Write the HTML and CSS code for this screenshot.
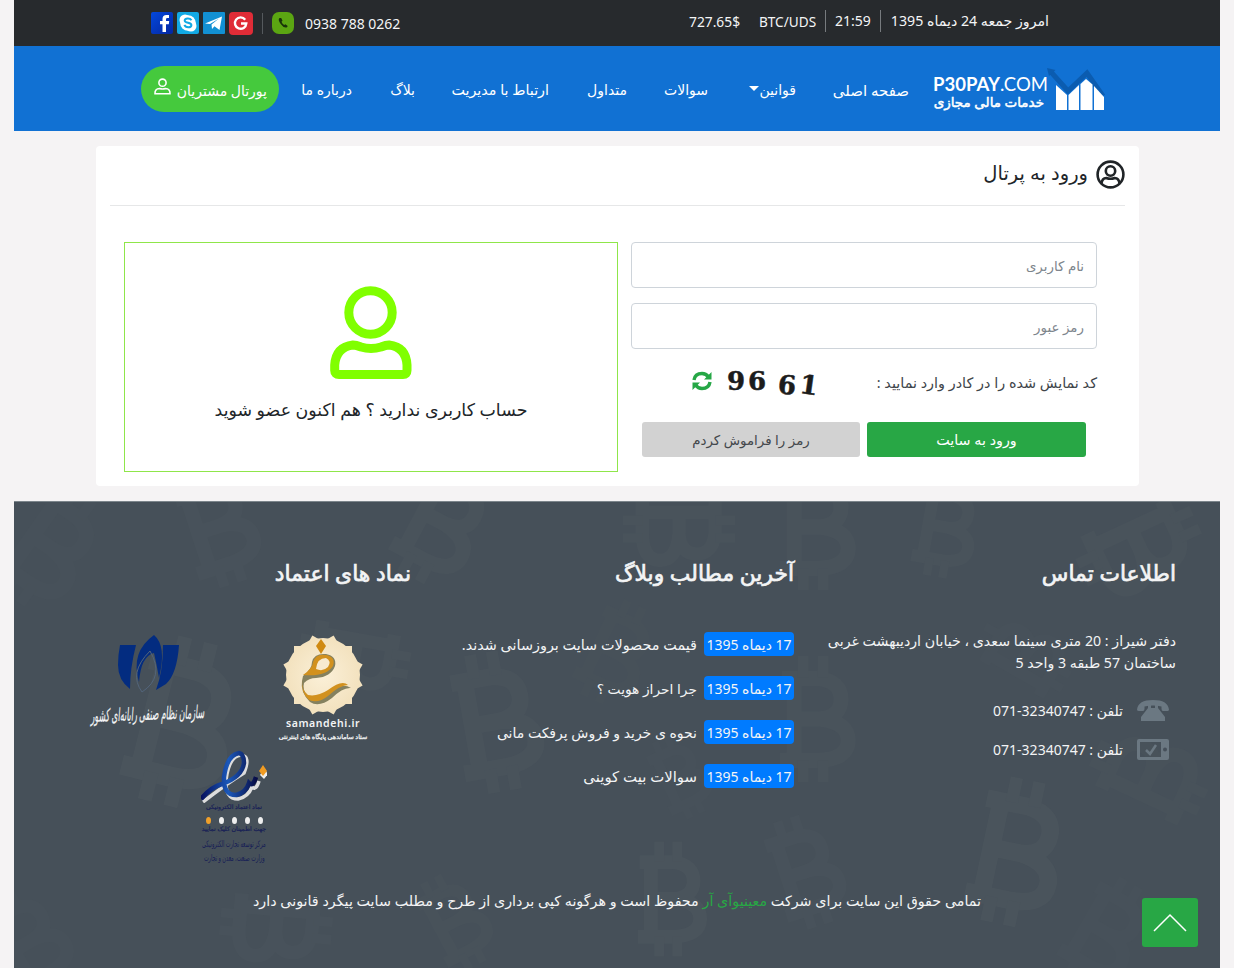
FILE: index.html
```
<!DOCTYPE html>
<html lang="fa" dir="rtl">
<head>
<meta charset="utf-8">
<title>P30PAY.COM</title>
<link rel="stylesheet" href="styles.css">
</head>
<body>
<div class="page">
  <div class="topbar">
    <div class="status">
      <span class="date">امروز جمعه 24 دیماه 1395</span>
      <span class="time">21:59</span>
      <span class="pair">BTC/UDS</span>
      <span class="rate" dir="ltr">727.65$</span>
    </div>
    <div class="social" dir="ltr">
      <svg width="22" height="22" viewBox="0 0 22 22"><defs><linearGradient id="fb" x2="1" y2="1"><stop stop-color="#0348dc"/><stop offset="1" stop-color="#0426a0"/></linearGradient></defs><rect width="22" height="22" rx="2" fill="url(#fb)"/><path d="M18 3h-2.500Q11.500 3 11.500 7v2H9v3.200h2.500V20H15v-7.800h2.800l.4-3.200H15V7.200q0-1.200 1.300-1.200H18z" fill="#fff"/></svg>
      <svg width="22" height="22" viewBox="0 0 22 22"><rect width="22" height="22" rx="2" fill="#12a9e4"/><circle cx="8" cy="8" r="5.500" fill="#fff"/><circle cx="14" cy="14" r="5.500" fill="#fff"/><circle cx="11" cy="11" r="7.800" fill="#fff"/><path d="M14.500 8.200C13 5.700 7.500 5.900 7.700 8.700c.2 2.700 6.800 1.500 6.700 4.400-.1 2.700-5.700 3.200-7-.2" fill="none" stroke="#12a9e4" stroke-width="2"/></svg>
      <svg width="22" height="22" viewBox="0 0 22 22"><rect width="22" height="22" rx="1" fill="#1290d3"/><path d="M2 11.500 19 4.500 16.500 18l-5-3.700-2.500 2.700-.5-4.500 7.500-6-9 5.500z" fill="#fff"/></svg>
      <svg width="24" height="23" viewBox="0 0 24 23"><rect width="24" height="23" rx="4" fill="#e02c37"/><path d="M16.200 7.700A5.700 5.700 0 1 0 17.300 11.500H12" fill="none" stroke="#fff" stroke-width="2.400"/></svg>
      <i class="divider"></i>
      <svg class="phone" width="22" height="22" viewBox="0 0 22 22"><rect width="22" height="22" rx="7" fill="#5ba512"/><path d="M7.500 6q-2 1.500 1.200 6t6.300 3.300l.7-1.300-2.300-1.700-1.200.8q-1.800-1-2.700-3.300l1-1L9.200 6z" fill="#18320a"/></svg>
      <span class="mobile">0938 788 0262</span>
    </div>
  </div>

  <nav class="navbar">
    <a class="brand">
      <svg class="brand-mark" width="60" height="44" viewBox="0 0 60 44"><path d="M5 5 22 24 41 6 57 29" fill="none" stroke="#0b5cb0" stroke-width="5"/><path d="M1 1 9.500 3 3 9z" fill="#0b5cb0"/><g fill="#fff"><path d="M10 18l11 10v15H10z"/><path d="M22.500 28l10.500-10v25H22.500z"/><path d="M34.500 17l5.500-5 6.500 5.500V43h-12z"/><path d="M48 19l10 11v13H48z"/></g></svg>
      <span class="brand-text"><b dir="ltr">P30PAY<em>.COM</em></b><small>خدمات مالی مجازی</small></span>
    </a>
    <a class="item w-home">صفحه اصلی</a>
    <a class="item w-rules">قوانین<i class="caret"></i></a>
    <a class="item w-faq">سوالات</a>
    <a class="item w-common">متداول</a>
    <a class="item w-contact">ارتباط با مدیریت</a>
    <a class="item w-blog">بلاگ</a>
    <a class="item w-about">درباره ما</a>
    <a class="portal"><span>پورتال مشتریان</span><svg width="17" height="17" viewBox="0 0 17 17" fill="none" stroke="#fff" stroke-width="1.600"><circle cx="8.500" cy="4.700" r="3.600"/><path d="M1 15.700q-.3-5 4.500-5.200 3 1 6 0 4.800.2 4.500 5.200z"/></svg></a>
  </nav>

  <main class="card">
    <header class="card-head">
      <svg width="29" height="29" viewBox="0 0 29 29" fill="none" stroke="#202427" stroke-width="2.600"><circle cx="14.500" cy="14.500" r="12.900"/><circle cx="14.500" cy="11" r="4.700"/><path d="M5.500 23.500q.5-5.300 4.800-5.500 4.200 1.600 8.400 0 4.300.2 4.800 5.500"/></svg>
      <h1>ورود به پرتال</h1>
    </header>
    <div class="card-body">
      <form class="login">
        <div class="field"><span class="ph-user">نام کاربری</span></div>
        <div class="field"><span class="ph-pass">رمز عبور</span></div>
        <div class="captcha-row">
          <label>کد نمایش شده را در کادر وارد نمایید :</label>
          <div class="captcha" dir="ltr">
            <svg class="refresh" width="20" height="20" viewBox="0 0 20 20"><g fill="none" stroke="#26a746" stroke-width="3.400"><path d="M2 9Q3 2.500 10 2.500q4 0 6.500 3.500"/><path d="M18 11q-1 6.500-8 6.500-4 0-6.500-3.500"/></g><path d="M19.500 1v7.500H12zM.5 19v-7.500H8z" fill="#26a746"/></svg>
            <b class="d1">9</b><b class="d2">6</b><b class="d3">6</b><b class="d4">1</b>
          </div>
        </div>
        <div class="buttons"><a class="btn go">ورود به سایت</a><a class="btn forgot">رمز را فراموش کردم</a></div>
      </form>
      <a class="signup">
        <svg width="82" height="93" viewBox="0 0 82 93" fill="none" stroke="#80ff00" stroke-width="9"><circle cx="40.500" cy="26.500" r="21.700"/><path d="M9 88.500H73q4 0 4-4V79Q76 61 59 59q-3 0-8 2-10 3-20 0-5-2-8-2Q6 61 4.700 79v5.500q0 4 4.300 4z"/></svg>
        <span>حساب کاربری ندارید ؟ هم اکنون عضو شوید</span>
      </a>
    </div>
  </main>

  <footer class="footer">
    <svg class="coins" width="1206" height="467" viewBox="0 0 1206 467" fill="none" stroke="#4b555d" stroke-width="17">
      <defs><g id="coin"><path d="M-36-45H5Q30-42 30-22T5 0H-22M5 0Q38 3 38 24T5 46H-38M-22-45V46"/><path d="M-12-70V-46M10-70V-46M-12 46V70M10 46V70" stroke-width="12"/></g></defs>
      <use href="#coin" transform="translate(35 45) rotate(35) scale(.9)" opacity=".25"/>
      <use href="#coin" transform="translate(202 25) rotate(-18) scale(.85)" opacity=".5"/>
      <use href="#coin" transform="translate(427 20) rotate(28) scale(.9)" opacity=".6"/>
      <use href="#coin" transform="translate(665 28) rotate(90) scale(.8)" opacity=".6"/>
      <use href="#coin" transform="translate(800 25) scale(.9)" opacity=".7"/>
      <use href="#coin" transform="translate(930 25) rotate(10) scale(.72)" opacity=".6"/>
      <use href="#coin" transform="translate(1125 45) rotate(65) scale(.9)" opacity=".6"/>
      <use href="#coin" transform="translate(340 155) rotate(100) scale(.8)" opacity=".6"/>
      <use href="#coin" transform="translate(165 220) rotate(14) scale(1.200)" opacity=".8"/>
      <use href="#coin" transform="translate(480 220) rotate(-10)" opacity=".7"/>
      <use href="#coin" transform="translate(800 217) scale(.9)" opacity=".6"/>
      <use href="#coin" transform="translate(600 150) rotate(25) scale(.75)" opacity=".2"/>
      <use href="#coin" transform="translate(1010 155) rotate(-60) scale(.7)" opacity=".3"/>
      <use href="#coin" transform="translate(1135 275) rotate(-65) scale(.85)" opacity=".4"/>
      <use href="#coin" transform="translate(665 275) rotate(-25) scale(.6)" opacity=".3"/>
      <use href="#coin" transform="translate(1000 350) rotate(12) scale(1.050)" opacity=".9"/>
      <use href="#coin" transform="translate(790 370) rotate(-18) scale(.8)" opacity=".5"/>
      <use href="#coin" transform="translate(655 397) scale(.82)" opacity=".8"/>
      <use href="#coin" transform="translate(262 425) rotate(95) scale(.8)" opacity=".5"/>
      <use href="#coin" transform="translate(440 420) rotate(-28) scale(.7)" opacity=".4"/>
      <use href="#coin" transform="translate(1090 430) rotate(30) scale(.8)" opacity=".3"/>
      <use href="#coin" transform="translate(15 440) rotate(-30) scale(.8)" opacity=".25"/>
    </svg>
    <div class="columns">
      <section class="contact">
        <h2 class="h-contact">اطلاعات تماس</h2>
        <p class="address"><span class="a1">دفتر شیراز : 20 متری سینما سعدی ، خیابان اردیبهشت غربی</span><span class="a2">ساختمان 57 طبقه 3 واحد 5</span></p>
        <div class="tel"><svg width="32" height="21" viewBox="0 0 32 21"><path d="M0 9.500C1 3 6 0 16 0s15 3 16 9.500c0 1.500-1 1.500-2 1.500h-4q-1.500 0-1.500-2.200V6.500q-8.500-2-17 0v2.300Q7.500 11 6 11H2Q0 11 0 9.500z" fill="#6b7882"/><path d="M11 5h3v3h4V5h3v3l7 9v4H4v-4l7-9z" fill="#6b7882"/></svg><span>تلفن : 32340747-071</span></div>
        <div class="tel second"><svg width="32" height="21" viewBox="0 0 32 21"><path d="M2 0h28q2 0 2 2v17q0 2-2 2H2q-2 0-2-2V2q0-2 2-2zm1 3v15h21V3z" fill="#6b7882" fill-rule="evenodd"/><circle cx="28" cy="10.500" r="2" fill="#46505a"/><path d="M9 11l4 4 6-9" fill="none" stroke="#6b7882" stroke-width="2.500"/></svg><span>تلفن : 32340747-071</span></div>
      </section>
      <section class="posts">
        <h2 class="h-posts">آخرین مطالب وبلاگ</h2>
        <ul>
          <li><b><span>17 دیماه 1395</span></b><span class="p1">قیمت محصولات سایت بروزسانی شدند.</span></li>
          <li><b><span>17 دیماه 1395</span></b><span class="p2">جرا احراز هویت ؟</span></li>
          <li><b><span>17 دیماه 1395</span></b><span class="p3">نحوه ی خرید و فروش پرفکت مانی</span></li>
          <li><b><span>17 دیماه 1395</span></b><span class="p4">سوالات بیت کوینی</span></li>
        </ul>
      </section>
      <section class="trust">
        <h2 class="h-trust">نماد های اعتماد</h2>
        <div class="badges">
          <div class="samandehi">
            <svg width="84" height="84" viewBox="-42 -42 84 84"><defs><path id="sq" d="M-29-29H29V29H-29z"/><radialGradient id="cream"><stop stop-color="#fbf0d8"/><stop offset="1" stop-color="#f3e2bf"/></radialGradient></defs><g fill="#f3e2bf"><use href="#sq"/><use href="#sq" transform="rotate(30)"/><use href="#sq" transform="rotate(60)"/></g><circle r="37" fill="url(#cream)"/><path d="M-2-36l5 7-5 8-5-8z" fill="#d08a12"/><g fill="#85815f"><path d="M-20 1Q-11-6-11-13-9-22 3-21 14-19 12-9 8 2-7 3-14 3-19 8-21 15-15 21-7 24 5 17 19 7 28 13 20 12 9 23-4 33-13 27-23 17-21 6z"/></g><g fill="#d2911e"><path d="M-20 0Q-10-7-10-13-7-22 3-20 13-18 10-9 3 2-20 0z"/><path d="M-20 5Q-22 15-15 20-6 22 5 15 19 4 25 10 17 10 5 21-5 29-14 25-23 17-20 5z"/></g><path d="M-7-6Q-6-17 3-17 9-14 5-8 0-3-7-6z" fill="#f8ead0"/></svg>
            <span class="s-name" dir="ltr">samandehi.ir</span>
            <span class="s-sub">ستاد ساماندهی پایگاه های اینترنتی</span>
          </div>
          <div class="nezam">
            <svg width="62" height="58" viewBox="0 0 62 58"><g fill="#032c80"><path d="M3 10h16Q13 33 13 54 1 45 1 30 1 20 3 10z"/><path d="M46 10h16q-2 29-13 39l-10 6q7-18 7-45z"/><path d="M37 0q13 11 5 43-2-12-5-25-13 3-15 29Q13 17 37 0z"/></g><path d="M33 16q-22 22-8 41 23-15 8-41z" fill="none" stroke="#53657b"/></svg>
            <span>سازمان نظام صنفی رایانه‌ای کشور</span>
          </div>
          <div class="enamad">
            <svg width="66" height="54" viewBox="0 0 66 54"><defs><linearGradient id="en"><stop stop-color="#06105d"/><stop offset=".5" stop-color="#1b58b9"/><stop offset="1" stop-color="#080d48"/></linearGradient></defs><path d="M1 51Q24 33 42 22 49 5 39 4 27 5 24 29q-1 19 12 19 10-2 14-12 4 4 7-6" fill="none" stroke="#ddd" stroke-width="3.500" transform="translate(1 2)"/><path d="M0 50Q10 38 21 35 41 28 43 14 43 5 38 4 26 6 23 28q-1 18 12 18 10-2 13-12 4 4 7-6" fill="none" stroke="url(#en)" stroke-width="4.500"/><path d="M63 19l4 6-4 5-4-4z" fill="#eee"/><path d="M62 16l4 6-4 5-4-5z" fill="#f09b22"/></svg>
            <span class="e1">نماد اعتماد الکترونیکی</span>
            <div class="dots"><i></i><i></i><i></i><i></i><i class="gold"></i></div>
            <span class="e2">جهت اطمینان کلیک نمایید</span>
            <span class="e3">مرکز توسعه تجارت الکترونیکی</span>
            <span class="e4">وزارت صنعت، معدن و تجارت</span>
          </div>
        </div>
      </section>
    </div>
    <p class="copyright"><span>تمامی حقوق این سایت برای شرکت <a>معینیوآی آر</a> محفوظ است و هرگونه کپی برداری از طرح و مطلب سایت پیگرد قانونی دارد</span></p>
    <a class="to-top"><svg width="34" height="20" viewBox="0 0 34 20"><path d="M1 18 17 2 33 18" fill="none" stroke="#fff" stroke-width="1.500"/></svg></a>
  </footer>
</div>
</body>
</html>
```
FILE: styles.css
```
* { box-sizing: border-box; margin: 0; padding: 0; }
body { background: #f5f3f4; font-family: "Noto Sans", "DejaVu Sans", sans-serif; font-size: 14px; color: #212529; white-space: nowrap; overflow: hidden; }
svg { display: block; flex: none; }
.page { width: 1206px; height: 968px; margin-right: 14px; display: flex; flex-direction: column; }

.topbar { height: 46px; background: #272a2d; color: #f4f5f6; display: flex; justify-content: space-between; padding: 0 171px 4px 137px; font-size: 14px; flex: none; }
.status, .social { display: flex; align-items: center; }
.date { width: 169px; border-left: 1px solid #777b7e; height: 22px; line-height: 22px; font-size: 14.2px; }
.time { width: 55px; text-align: center; border-left: 1px solid #777b7e; height: 22px; line-height: 22px; }
.pair { width: 66px; text-align: left; font-size: 13.6px; }
.rate { width: 70px; text-align: left; font-size: 13.8px; }
.social { gap: 4px; padding-top: 4px; }
.social svg:first-child { margin-left: 0; }
.divider { width: 1px; height: 21px; background: #55595d; margin: 0 5px 0 5px; }
.mobile { margin-left: 7px; }

.navbar { height: 85px; background: #1171d3; color: #fff; display: flex; align-items: center; padding-right: 114px; flex: none; }
.brand { display: flex; align-items: center; width: 173px; gap: 2px; }
.brand-text { display: flex; flex-direction: column; width: 111px; padding-top: 4px; }
.brand-text b { font: 700 18.5px/20px Lato, sans-serif; height: 22px; }
.brand-text em { font-style: normal; font-weight: 400; }
.brand-text small { font-size: 13.500px; line-height: 12px; -webkit-text-stroke: .5px; }
.item { margin-left: 37px; display: flex; padding-top: 2px; }
.w-home { width: 76px; margin-right: 24px; font-size: 15px; }
.w-rules { width: 46px; margin-left: 42px; }
.w-faq { width: 44px; }
.w-common { width: 41px; }
.w-contact { width: 97px; font-size: 14.3px; }
.w-blog { width: 26px; }
.w-about { width: 49px; margin-left: 24px; }
.caret { border: 5px solid transparent; border-top-color: #fff; border-bottom: 0; height: 5px; margin-top: 6px; }
.portal { width: 138px; height: 46px; border-radius: 23px; background: #45c93d; display: flex; align-items: center; padding: 3px 12px 0 0; gap: 6px; }
.portal span { width: 90px; }
.portal svg { margin-top: -7px; }

.card { width: 1043px; height: 340px; margin: 15px 81px 15px 0; background: #fff; border-radius: 4px; flex: none; padding: 0 14px; }
.card-head { height: 60px; border-bottom: 1px solid #e6e7e8; display: flex; align-items: center; gap: 8px; padding-bottom: 2px; }
.card-head h1 { font-weight: 400; font-size: 19.5px; padding-bottom: 4px; }
.card-body { display: flex; gap: 13px; padding: 36px 28px 0 13px; }
.login { width: 466px; }
.field { height: 46px; border: 1px solid #ced4da; border-radius: 4px; color: #7d858c; display: flex; align-items: center; padding: 2px 12px 0; margin-bottom: 15px; font-size: 13.4px; }
.captcha-row { display: flex; height: 59px; margin-top: -1px; }
.captcha-row label { width: 277px; line-height: 39px; color: #40454a; font-size: 14.4px; }
.captcha { display: flex; align-items: center; height: 36px; font: 700 26px/30px "DejaVu Serif", serif; color: #1c1c1c; width: 128px; }
.captcha b { -webkit-text-stroke: .5px; }
.captcha svg { margin-right: 15px; }
.d2 { margin-left: 3px; }
.d3 { margin: 7px 0 0 12px; transform: rotate(5deg); }
.d4 { margin: 7px 0 0 4px; transform: rotate(8deg); }
.buttons { display: flex; gap: 7px; padding-right: 11px; }
.btn { height: 35px; width: 219px; border-radius: 3px; display: flex; align-items: center; justify-content: center; }
.go { background: #28a745; color: #fff; font-size: 14.3px; }
.forgot { background: #d2d2d2; color: #43474b; width: 218px; font-size: 13.4px; }
.signup { width: 494px; height: 230px; border: 1px solid #8fe64a; display: flex; flex-direction: column; align-items: center; padding-top: 43px; gap: 18px; font-size: 17.4px; }

.footer { position: relative; height: 467px; background: #465059; color: #f3f4f5; flex: none; border-top: 1px solid #7c858b; }
.coins { position: absolute; inset: 0; }
.columns { position: relative; display: flex; padding: 54px 44px 0 0; height: 380px; }
h2 { font-size: 21.8px; line-height: 34px; font-weight: 400; -webkit-text-stroke: .7px; }
.contact { width: 382px; }
.posts { width: 383px; }
.trust { width: 330px; }
.address { display: flex; flex-direction: column; align-items: flex-start; padding-top: 40px; line-height: 22px; font-size: 14.2px; }
.tel { display: flex; gap: 14px; padding-right: 7px; margin-top: 25px; height: 22px; align-items: center; }
.tel.second { margin-top: 17px; }
.posts ul { list-style: none; padding-top: 42px; }
.posts li { display: flex; align-items: center; height: 24px; margin-bottom: 20px; gap: 7px; }
.posts b { font-weight: 400; background: #007bff; border-radius: 4px; width: 90px; height: 24px; display: flex; justify-content: center; align-items: center; }
.p1 { font-size: 14.4px; }
.p2 { font-size: 13.8px; }
.p4 { font-size: 14.9px; }
.badges { display: flex; flex-wrap: wrap; padding-top: 43px; }
.samandehi { width: 176px; display: flex; flex-direction: column; align-items: center; height: 117px; }
.s-name { font-size: 10.5px; line-height: 13px; font-weight: 600; letter-spacing: .6px; }
.s-sub { font-size: 6.3px; line-height: 13px; -webkit-text-stroke: .3px; }
.nezam { width: 150px; display: flex; flex-direction: column; align-items: center; padding: 2px 24px 0 0; font-size: 18px; line-height: 26px; gap: 7px; }
.nezam span { transform: rotate(-2deg) scaleX(.44) skewX(-14deg); -webkit-text-stroke: .2px; }
.enamad { width: 66px; margin-right: 144px; display: flex; flex-direction: column; align-items: center; color: #171e56; font-size: 6.2px; line-height: 8px; -webkit-text-stroke: .2px; }
.enamad svg { margin-top: -1px; }
.dots { display: flex; gap: 8px; height: 7px; margin: 6px 0 1px; }
.dots i { width: 5px; height: 7px; border-radius: 50%; background: #eee; }
.dots .gold { background: #f0a02a; }
.e3, .e4 { font-size: 9px; line-height: 14px; transform: scaleX(.56); -webkit-text-stroke: 0; }
.e3 { margin-top: 4px; }
.copyright { position: relative; display: flex; justify-content: center; line-height: 24px; padding-top: 7px; font-size: 14.3px; }
.copyright a { color: #28a745; }
.to-top { position: absolute; left: 1128px; top: 396px; width: 56px; height: 49px; border-radius: 3px; background: #28a745; display: flex; align-items: center; justify-content: center; }
```
